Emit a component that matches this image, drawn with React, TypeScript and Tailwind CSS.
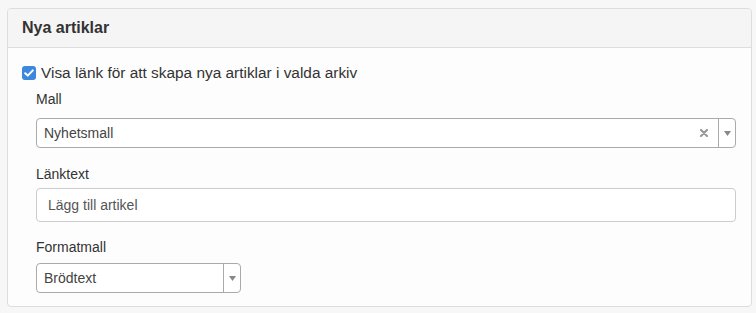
import React from "react";

function Arrow() {
  return (
    <svg width="7" height="5" viewBox="0 0 7 5" className="block">
      <path d="M0 0 L7 0 L3.5 5 Z" fill="#888" />
    </svg>
  );
}

export default function App() {
  return (
    <div
      className="w-[756px] h-[313px] bg-[#f7f7f7] pt-[8px] pl-[7px] text-[#333]"
      style={{ fontFamily: '"Liberation Sans", Arial, Helvetica, sans-serif' }}
    >
      <div className="w-[745px] h-[299px] border border-[#dddddd] rounded-[4px] bg-[#fdfdfd] overflow-hidden">
        <div className="h-[39px] bg-[#f5f5f5] border-b border-[#dddddd] px-[14px] flex items-center">
          <h3 className="text-[16px] font-bold leading-[18px] text-[#333]">Nya artiklar</h3>
        </div>
        <div className="pt-[15px] pl-[14px] pr-[15px]">
          <div className="h-5 flex items-center text-[15.4px] leading-5">
            <span className="w-[14px] h-[14px] rounded-[3px] bg-[#3b88dd] flex items-center justify-center mr-[5px]">
              <svg width="10" height="8" viewBox="0 0 10 8">
                <path d="M1.2 4.2 L3.8 6.6 L8.8 1.4" stroke="#fff" strokeWidth="2" fill="none" strokeLinecap="round" strokeLinejoin="round" />
              </svg>
            </span>
            <span>Visa länk för att skapa nya artiklar i valda arkiv</span>
          </div>
          <div className="ml-[14px] text-[14px]">
            <div className="mt-[6px] h-5 leading-5">Mall</div>
            <div className="mt-[9px] h-[30px] border border-[#aaaaaa] rounded-[4px] bg-white flex items-center">
              <span className="flex-1 pl-[7px] text-[#444] leading-5">Nyhetsmall</span>
              <span className="mr-[10px] flex items-center">
                <svg width="8" height="8" viewBox="0 0 8 8" className="block">
                  <path d="M1 1 L7 7 M7 1 L1 7" stroke="#999" strokeWidth="2.2" strokeLinecap="round" />
                </svg>
              </span>
              <span className="w-[17px] h-full border-l border-[#aaaaaa] flex items-center justify-center">
                <Arrow />
              </span>
            </div>
            <div className="mt-[16px] h-5 leading-5">Länktext</div>
            <div className="mt-[4px] h-[34px] border border-[#cccccc] rounded-[4px] bg-white flex items-center pl-[11px] text-[#555]">
              Lägg till artikel
            </div>
            <div className="mt-[15px] h-5 leading-5">Formatmall</div>
            <div className="mt-[6px] w-[205px] h-[30px] border border-[#aaaaaa] rounded-[4px] bg-white flex items-center">
              <span className="flex-1 pl-[7px] text-[#444] leading-5">Brödtext</span>
              <span className="w-[17px] h-full border-l border-[#aaaaaa] flex items-center justify-center">
                <Arrow />
              </span>
            </div>
          </div>
        </div>
      </div>
    </div>
  );
}
